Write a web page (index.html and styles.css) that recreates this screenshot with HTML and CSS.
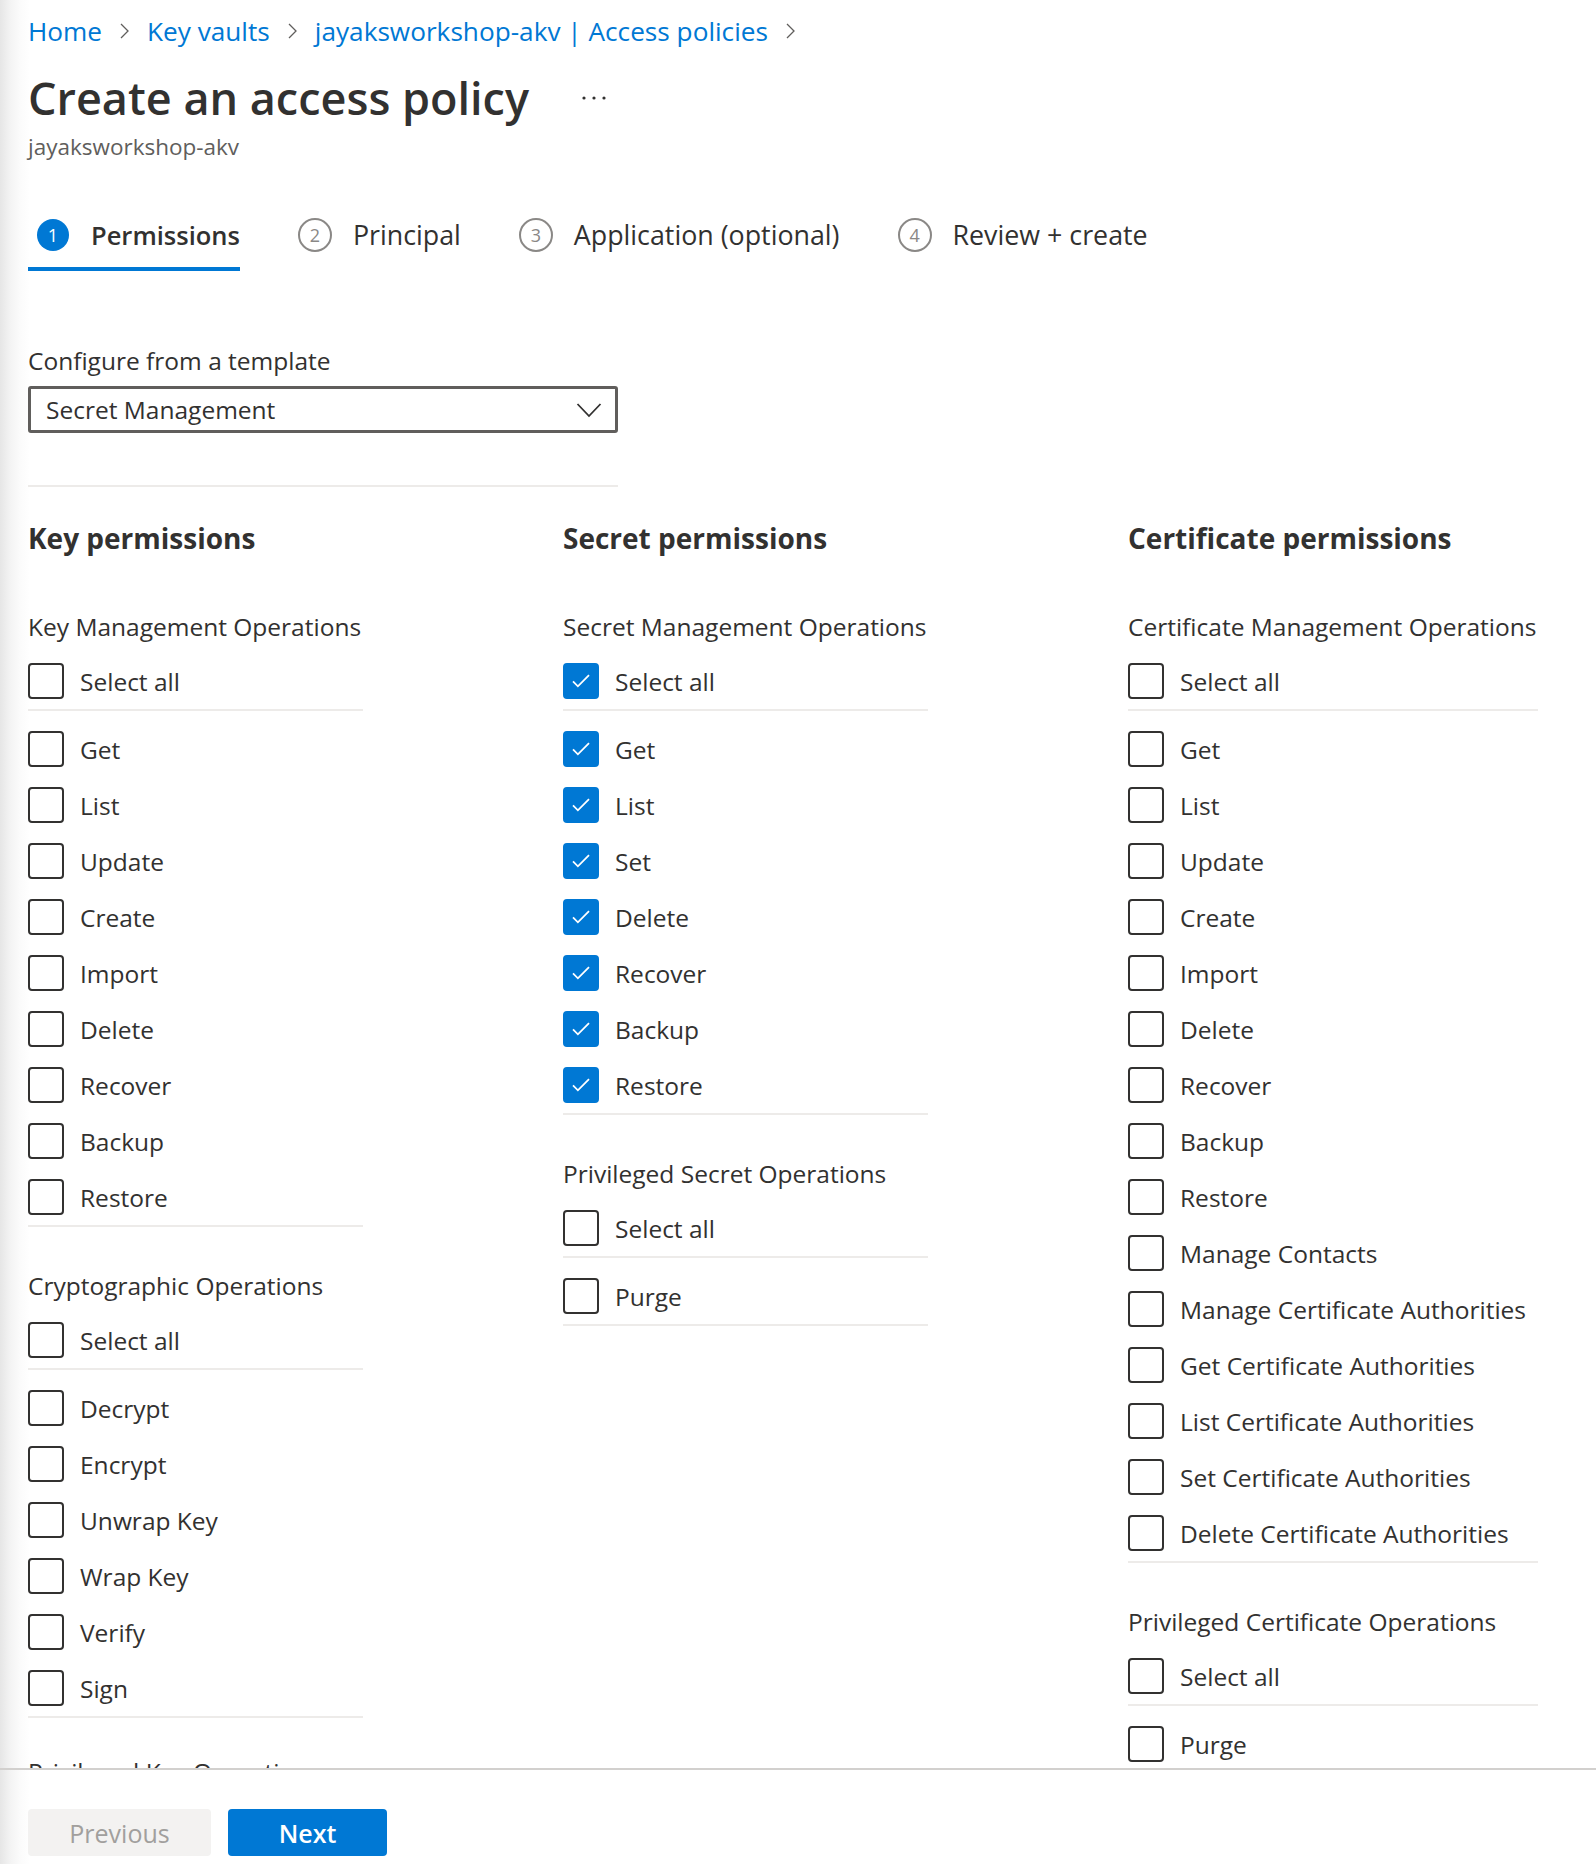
FILE: index.html
```html
<!DOCTYPE html>
<html lang="en">
<head>
<meta charset="utf-8">
<title>Create an access policy</title>
<link rel="stylesheet" href="styles.css">
</head>
<body>
<div class="page">
  <div class="scroll">
    <nav class="crumbs">
      <a class="crumb">Home</a>
      <svg class="chev" width="9" height="16" viewBox="0 0 9 16"><polyline points="1,1 8,8 1,15"/></svg>
      <a class="crumb">Key vaults</a>
      <svg class="chev" width="9" height="16" viewBox="0 0 9 16"><polyline points="1,1 8,8 1,15"/></svg>
      <a class="crumb">jayaksworkshop-akv | Access policies</a>
      <svg class="chev" width="9" height="16" viewBox="0 0 9 16"><polyline points="1,1 8,8 1,15"/></svg>
    </nav>

    <div class="title-row">
      <h1 class="title">Create an access policy</h1>
      <svg class="more" width="26" height="6" viewBox="0 0 26 6"><circle cx="3" cy="3" r="1.6"/><circle cx="13" cy="3" r="1.6"/><circle cx="23" cy="3" r="1.6"/></svg>
    </div>
    <div class="subtitle">jayaksworkshop-akv</div>

    <div class="tabs">
      <div class="tab active"><span class="step filled">1</span><span class="tab-label">Permissions</span></div>
      <div class="tab"><span class="step">2</span><span class="tab-label">Principal</span></div>
      <div class="tab"><span class="step">3</span><span class="tab-label">Application (optional)</span></div>
      <div class="tab"><span class="step">4</span><span class="tab-label">Review + create</span></div>
    </div>

    <div class="field-label">Configure from a template</div>
    <div class="dropdown">
      <span>Secret Management</span>
      <svg class="dd-chev" width="26" height="16" viewBox="0 0 26 16"><polyline points="1.5,2 13,14 24.5,2"/></svg>
    </div>
    <div class="divider"></div>

    <div class="cols">
      <section class="col col-key">
        <h2 class="heading">Key permissions</h2>
        <div class="group">
          <div class="gtitle">Key Management Operations</div>
          <div class="row"><span class="box"></span><span>Select all</span></div>
          <div class="sep first"></div>
          <div class="items">
            <div class="row"><span class="box"></span><span>Get</span></div>
            <div class="row"><span class="box"></span><span>List</span></div>
            <div class="row"><span class="box"></span><span>Update</span></div>
            <div class="row"><span class="box"></span><span>Create</span></div>
            <div class="row"><span class="box"></span><span>Import</span></div>
            <div class="row"><span class="box"></span><span>Delete</span></div>
            <div class="row"><span class="box"></span><span>Recover</span></div>
            <div class="row"><span class="box"></span><span>Backup</span></div>
            <div class="row"><span class="box"></span><span>Restore</span></div>
          </div>
          <div class="sep last"></div>
        </div>
        <div class="group">
          <div class="gtitle">Cryptographic Operations</div>
          <div class="row"><span class="box"></span><span>Select all</span></div>
          <div class="sep first"></div>
          <div class="items">
            <div class="row"><span class="box"></span><span>Decrypt</span></div>
            <div class="row"><span class="box"></span><span>Encrypt</span></div>
            <div class="row"><span class="box"></span><span>Unwrap Key</span></div>
            <div class="row"><span class="box"></span><span>Wrap Key</span></div>
            <div class="row"><span class="box"></span><span>Verify</span></div>
            <div class="row"><span class="box"></span><span>Sign</span></div>
          </div>
          <div class="sep last"></div>
        </div>
        <div class="group">
          <div class="gtitle">Privileged Key Operations</div>
        </div>
      </section>

      <section class="col col-secret">
        <h2 class="heading">Secret permissions</h2>
        <div class="group">
          <div class="gtitle">Secret Management Operations</div>
          <div class="row"><span class="box on"><svg viewBox="0 0 36 36"><polyline points="9,18.5 14.5,24 27,11.5"/></svg></span><span>Select all</span></div>
          <div class="sep first"></div>
          <div class="items">
            <div class="row"><span class="box on"><svg viewBox="0 0 36 36"><polyline points="9,18.5 14.5,24 27,11.5"/></svg></span><span>Get</span></div>
            <div class="row"><span class="box on"><svg viewBox="0 0 36 36"><polyline points="9,18.5 14.5,24 27,11.5"/></svg></span><span>List</span></div>
            <div class="row"><span class="box on"><svg viewBox="0 0 36 36"><polyline points="9,18.5 14.5,24 27,11.5"/></svg></span><span>Set</span></div>
            <div class="row"><span class="box on"><svg viewBox="0 0 36 36"><polyline points="9,18.5 14.5,24 27,11.5"/></svg></span><span>Delete</span></div>
            <div class="row"><span class="box on"><svg viewBox="0 0 36 36"><polyline points="9,18.5 14.5,24 27,11.5"/></svg></span><span>Recover</span></div>
            <div class="row"><span class="box on"><svg viewBox="0 0 36 36"><polyline points="9,18.5 14.5,24 27,11.5"/></svg></span><span>Backup</span></div>
            <div class="row"><span class="box on"><svg viewBox="0 0 36 36"><polyline points="9,18.5 14.5,24 27,11.5"/></svg></span><span>Restore</span></div>
          </div>
          <div class="sep last"></div>
        </div>
        <div class="group">
          <div class="gtitle">Privileged Secret Operations</div>
          <div class="row"><span class="box"></span><span>Select all</span></div>
          <div class="sep first"></div>
          <div class="items">
            <div class="row"><span class="box"></span><span>Purge</span></div>
          </div>
          <div class="sep last"></div>
        </div>
      </section>

      <section class="col col-cert">
        <h2 class="heading">Certificate permissions</h2>
        <div class="group">
          <div class="gtitle">Certificate Management Operations</div>
          <div class="row"><span class="box"></span><span>Select all</span></div>
          <div class="sep first"></div>
          <div class="items">
            <div class="row"><span class="box"></span><span>Get</span></div>
            <div class="row"><span class="box"></span><span>List</span></div>
            <div class="row"><span class="box"></span><span>Update</span></div>
            <div class="row"><span class="box"></span><span>Create</span></div>
            <div class="row"><span class="box"></span><span>Import</span></div>
            <div class="row"><span class="box"></span><span>Delete</span></div>
            <div class="row"><span class="box"></span><span>Recover</span></div>
            <div class="row"><span class="box"></span><span>Backup</span></div>
            <div class="row"><span class="box"></span><span>Restore</span></div>
            <div class="row"><span class="box"></span><span>Manage Contacts</span></div>
            <div class="row"><span class="box"></span><span>Manage Certificate Authorities</span></div>
            <div class="row"><span class="box"></span><span>Get Certificate Authorities</span></div>
            <div class="row"><span class="box"></span><span>List Certificate Authorities</span></div>
            <div class="row"><span class="box"></span><span>Set Certificate Authorities</span></div>
            <div class="row"><span class="box"></span><span>Delete Certificate Authorities</span></div>
          </div>
          <div class="sep last"></div>
        </div>
        <div class="group">
          <div class="gtitle">Privileged Certificate Operations</div>
          <div class="row"><span class="box"></span><span>Select all</span></div>
          <div class="sep first"></div>
          <div class="items">
            <div class="row"><span class="box"></span><span>Purge</span></div>
          </div>
        </div>
      </section>
    </div>
  </div>

  <footer class="footer">
    <button class="btn btn-prev" disabled>Previous</button>
    <button class="btn btn-next">Next</button>
  </footer>
</div>
</body>
</html>
```

FILE: styles.css
```css
* { box-sizing: border-box; }

html, body {
  margin: 0;
  padding: 0;
}

body {
  font-family: "Open Sans", "Noto Sans", "Liberation Sans", sans-serif;
  color: #323130;
  background: #fff;
}

.page {
  height: 1864px;
  display: flex;
  flex-direction: column;
  overflow: hidden;
  background: linear-gradient(90deg, #e6e6e6 0px, #f3f3f3 10px, #fbfbfb 20px, #ffffff 30px);
}

.scroll {
  flex: none;
  height: 1768px;
  overflow: hidden;
  padding: 13px 0 0 28px;
}

/* breadcrumb */
.crumbs {
  display: flex;
  align-items: center;
  gap: 18px;
  height: 36px;
  font-size: 26.2px;
  line-height: 36px;
}
.crumb {
  color: #0078d4;
  text-decoration: none;
  white-space: nowrap;
}
.chev {
  flex: none;
  fill: none;
  stroke: #605e5c;
  stroke-width: 1.3;
}

/* title */
.title-row {
  display: flex;
  align-items: center;
  gap: 52px;
  margin-top: 21px;
  height: 56px;
}
.title {
  margin: 0;
  font-size: 45px;
  line-height: 56px;
  font-weight: 600;
  color: #323130;
  white-space: nowrap;
}
.more {
  fill: #323130;
  margin-top: 0;
}
.subtitle {
  margin-top: 5.5px;
  font-size: 22.5px;
  line-height: 30px;
  color: #605e5c;
}

/* tabs */
.tabs {
  display: flex;
  gap: 49px;
  margin-top: 55.5px;
}
.tab {
  display: flex;
  align-items: center;
  gap: 21px;
  padding: 0 0 14px 9px;
  border-bottom: 4px solid transparent;
  font-size: 26.8px;
  line-height: 36px;
  white-space: nowrap;
}
.tab.active {
  border-bottom-color: #0078d4;
  font-weight: 600;
  font-size: 25.5px;
}
.step {
  width: 34px;
  height: 34px;
  border-radius: 50%;
  border: 2px solid #8a8886;
  color: #8a8886;
  font-size: 18px;
  font-weight: 400;
  line-height: 30px;
  text-align: center;
  flex: none;
}
.step.filled {
  width: 32px;
  height: 32px;
  margin-right: 1px;
  border: none;
  background: #0078d4;
  color: #fff;
  line-height: 32px;
}

/* template dropdown */
.field-label {
  margin-top: 73.5px;
  font-size: 24.5px;
  line-height: 32px;
}
.dropdown {
  margin-top: 9.5px;
  width: 590px;
  height: 47px;
  border: 3px solid #605e5c;
  border-radius: 3px;
  display: flex;
  align-items: center;
  justify-content: space-between;
  padding: 0 13px 0 15px;
  font-size: 24.5px;
}
.dd-chev {
  fill: none;
  stroke: #323130;
  stroke-width: 1.8;
}
.divider {
  margin-top: 52px;
  width: 590px;
  height: 2px;
  background: #edebe9;
}

/* permission columns */
.cols {
  display: grid;
  grid-template-columns: 335px 365px 410px;
  column-gap: 200px;
  margin-top: 30.5px;
  align-items: start;
}
.heading {
  margin: 0 0 52.5px 0;
  font-size: 28px;
  line-height: 40px;
  font-weight: 700;
  color: #323130;
  white-space: nowrap;
}
.group + .group {
  margin-top: 42px;
}
.col-key .group:last-child {
  margin-top: 37px;
}
.gtitle {
  font-size: 24.5px;
  line-height: 34px;
  margin-bottom: 19px;
  white-space: nowrap;
}
.items {
  display: flex;
  flex-direction: column;
  gap: 20px;
}
.row {
  display: flex;
  align-items: center;
  gap: 16px;
  height: 36px;
  font-size: 24.5px;
  white-space: nowrap;
}
.box {
  flex: none;
  width: 36px;
  height: 36px;
  border: 2px solid #323130;
  border-radius: 4px;
  background: #fff;
  display: flex;
}
.box.on {
  border-color: #0078d4;
  background: #0078d4;
}
.box.on svg {
  width: 32px;
  height: 32px;
  fill: none;
  stroke: #fff;
  stroke-width: 2;
}
.sep {
  height: 2px;
  background: #edebe9;
}
.sep.first {
  margin: 10px 0 20px 0;
}
.sep.last {
  margin-top: 10px;
}

/* footer */
.footer {
  flex: none;
  height: 96px;
  border-top: 2px solid #d2d0ce;
  padding: 39px 0 0 28px;
  display: flex;
  align-items: flex-start;
  gap: 17px;
}
.btn {
  height: 47px;
  border: none;
  border-radius: 4px;
  font-family: inherit;
  font-size: 25px;
  padding: 0;
}
.btn-prev {
  width: 183px;
  background: #f3f2f1;
  color: #a19f9d;
}
.btn-next {
  width: 159px;
  background: #0078d4;
  color: #fff;
  font-weight: 600;
}
```
